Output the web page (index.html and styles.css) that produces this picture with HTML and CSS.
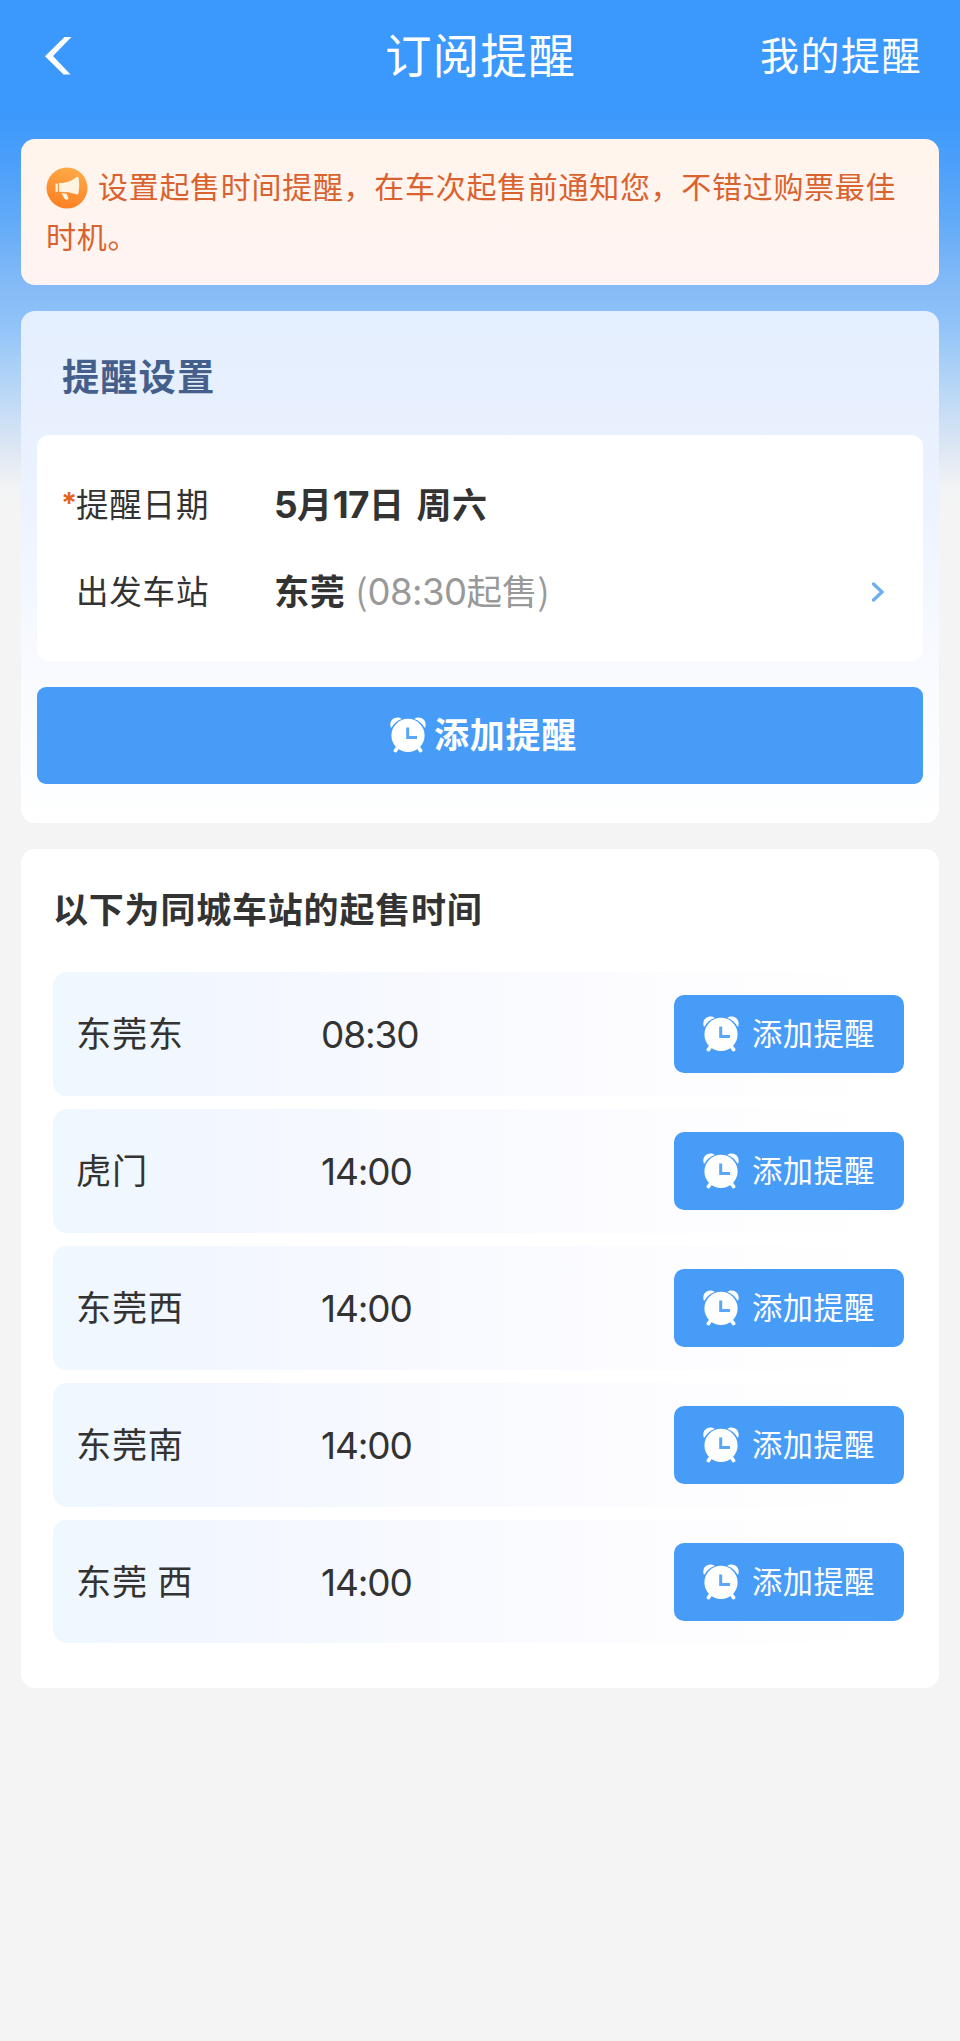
FILE: index.html
```html
<!DOCTYPE html>
<html lang="zh-CN">
<head>
<meta charset="utf-8">
<title>订阅提醒</title>
<link rel="stylesheet" href="styles.css">
</head>
<body>
<svg class="defs" aria-hidden="true">
  <symbol id="alarm" viewBox="0 0 36 36">
    <path d="M.8 10.500C-1 5 2.500.4 7.500.4c2 0 3.500.6 4.300 1.500C7.500 3.200 3.500 6.200 1.600 10.500zM35.200 10.500C37 5 33.500.4 28.500.4c-2 0-3.500.6-4.300 1.500C28.500 3.200 32.500 6.200 34.400 10.500z" fill="currentColor"/>
    <path d="M8 30l-2.600 3.600M28 30l2.600 3.600" stroke="currentColor" stroke-width="3.600" stroke-linecap="round"/>
    <circle cx="18" cy="18.400" r="16.600" fill="currentColor"/>
    <path d="M17.700 10.500v9.900h9.300" fill="none" stroke="#5aa6f8" stroke-width="3"/>
  </symbol>
</svg>
<header class="navbar">
  <a class="nav-back"><svg width="28" height="38" viewBox="0 0 28 38"><path d="M19.500 0h7L8 19 25.500 37.500h-7L0 19.200z" fill="#fff"/></svg></a>
  <h1 class="nav-title">订阅提醒</h1>
  <a class="nav-link">我的提醒</a>
</header>
<main class="content">
  <section class="notice">
    <svg class="horn" viewBox="0 0 42 42">
      <defs><linearGradient id="hg" x1=".7" y1="0" x2=".4" y2="1"><stop offset="0" stop-color="#ffab48"/><stop offset="1" stop-color="#fb8023"/></linearGradient></defs>
      <circle cx="21" cy="21" r="20.500" fill="url(#hg)"/>
      <path d="M9.500 16.800q1.200-.8 2.300 0v7.700q-1.200.8-2.300 0zM13 16c7 0 12-1.500 17.500-6 1-.6 2 0 2.200 1.200.8 5 .6 10-.2 15-.2 1-1.200 1.500-2.200 1C25 25.500 20 24.700 13 24.700zM15.500 26l5 .8 2 4.500c.3 1.500-3 2-4 .5z" fill="#fff3e2"/>
    </svg><span>设置起售时间提醒，在车次起售前通知您，不错过购票最佳时机。</span>
  </section>

  <section class="card settings">
    <h2 class="settings-title">提醒设置</h2>
    <div class="form">
      <div class="field"><span class="star">*</span><span class="label">提醒日期</span><strong class="value"><span class="num">5</span>月<span class="num">17</span>日 周六</strong></div>
      <div class="field"><span class="star"></span><span class="label">出发车站</span><strong class="value">东莞</strong><span class="sale">(<span class="num">08:30</span>起售)</span>
        <svg class="arrow" width="14" height="20" viewBox="0 0 14 20"><path d="M2.500 2l8.500 8-8.500 8" fill="none" stroke="#6faeee" stroke-width="3.300" stroke-linecap="round"/></svg></div>
    </div>
    <button class="btn btn-main"><svg class="alarm"><use href="#alarm"/></svg><span>添加提醒</span></button>
  </section>

  <section class="card stations">
    <h2 class="stations-title">以下为同城车站的起售时间</h2>
    <ul class="list">
      <li class="row"><span class="name">东莞东</span><span class="time">08:30</span><button class="btn btn-small"><svg class="alarm"><use href="#alarm"/></svg><span>添加提醒</span></button></li>
      <li class="row"><span class="name">虎门</span><span class="time">14:00</span><button class="btn btn-small"><svg class="alarm"><use href="#alarm"/></svg><span>添加提醒</span></button></li>
      <li class="row"><span class="name">东莞西</span><span class="time">14:00</span><button class="btn btn-small"><svg class="alarm"><use href="#alarm"/></svg><span>添加提醒</span></button></li>
      <li class="row"><span class="name">东莞南</span><span class="time">14:00</span><button class="btn btn-small"><svg class="alarm"><use href="#alarm"/></svg><span>添加提醒</span></button></li>
      <li class="row"><span class="name">东莞 西</span><span class="time">14:00</span><button class="btn btn-small"><svg class="alarm"><use href="#alarm"/></svg><span>添加提醒</span></button></li>
    </ul>
  </section>
</main>
</body>
</html>
```
FILE: styles.css
```css
* { box-sizing: border-box; }
body {
  margin: 0;
  min-height: 2041px;
  font-family: "Noto Sans CJK SC", sans-serif;
  color: #333;
  background: linear-gradient(180deg, #3b98fc 0, #3b98fc 113px, #4b9ffa 160px, #62aaf8 220px, #84bbf7 285px, #8ec2f8 320px, #b2d4f6 380px, #dbe6f4 445px, #f3f4f5 490px, #f4f4f4 510px) no-repeat #f4f4f4;
}
h1, h2, ul { margin: 0; padding: 0; }
.defs { position: absolute; width: 0; height: 0; }

.navbar {
  display: grid;
  grid-template-columns: 260px 1fr 260px;
  align-items: center;
  height: 113px;
  padding: 0 38px 7px 43px;
  color: #fff;
}
.nav-back { display: flex; padding: 5px 0 0 2px; }
.nav-title { font-size: 46.500px; font-weight: 400; letter-spacing: 1.300px; line-height: 60px; text-align: center; margin-left: -4px; }
.nav-link { font-size: 39px; letter-spacing: 1.500px; line-height: 60px; text-align: right; }

.content { display: flex; flex-direction: column; gap: 26px; padding: 26px 21px 0; }
.notice {
  height: 146px;
  padding: 22px 25px 0;
  border-radius: 14px;
  background: linear-gradient(180deg, #fff5ec, #fff4f3);
  color: #d9622f;
  font-size: 30px;
  letter-spacing: .7px;
  line-height: 49.5px;
}
.horn { width: 42px; height: 42px; margin-right: 10px; vertical-align: -11px; }

.card { border-radius: 14px; }
.settings {
  height: 512px;
  padding: 0 16px;
  background: linear-gradient(180deg, #e4efff 0, #e9f0fe 125px, #f1f6ff 260px, #f9faff 350px, #fdfeff 480px, #fff 100%);
}
.settings-title { height: 124px; padding-left: 25px; color: #455f8c; font-size: 37.3px; line-height: 128px; letter-spacing: 1px; }
.form { height: 226px; padding: 24px 38px 0 26px; border-radius: 12px; background: #fff; }
.field { display: flex; align-items: center; height: 87px; }
.star { width: 13px; margin-left: -2px; margin-right: 2px; color: #e2641f; font: 700 29px/30px Inter, sans-serif; }
.label { width: 198px; font-size: 32.5px; letter-spacing: .8px; }
.value { font-size: 35px; letter-spacing: .7px; word-spacing: 3px; }
.value .num { font-family: Inter, sans-serif; font-size: 37px; letter-spacing: -.6px; }
.sale { margin-left: 10px; color: #999; font-size: 35.5px; }
.sale .num { font-family: Inter, sans-serif; font-size: 36.5px; letter-spacing: -.5px; }
.arrow { margin: 4px 0 0 auto; }

.btn {
  display: flex;
  align-items: center;
  justify-content: center;
  padding: 0;
  border: 0;
  background: #479cf8;
  color: #fff;
  font-family: inherit;
}
.btn span { padding-bottom: 4px; }
.alarm { flex: none; width: 36px; height: 36px; }
.btn-main { width: 100%; height: 97px; margin-top: 26px; padding: 0 0 2px 7px; border-radius: 9px; gap: 8px; font-size: 35px; letter-spacing: .8px; font-weight: 700; }
.btn-small { width: 230px; height: 78px; margin-left: auto; border-radius: 10px; gap: 13px; font-size: 30.2px; letter-spacing: .6px; }

.stations { height: 839px; padding: 0 35px 0 32px; background: #fff; }
.stations-title { height: 123px; font-size: 35px; letter-spacing: .8px; line-height: 118px; }
.list { display: grid; gap: 13px; list-style: none; }
.row {
  display: flex;
  align-items: center;
  height: 123.900px;
  padding-left: 23px;
  border-radius: 14px;
  background: linear-gradient(90deg, #eff7ff 0, #f3f7ff 22%, #f9faff 50%, #fdfdff 75%, #fff 100%);
}
.name { width: 245px; padding-bottom: 5px; font-size: 35.2px; letter-spacing: .7px; word-spacing: 1px; }
.time { padding-top: 1px; font-family: Inter, sans-serif; font-size: 37px; letter-spacing: -1.100px; }
```
